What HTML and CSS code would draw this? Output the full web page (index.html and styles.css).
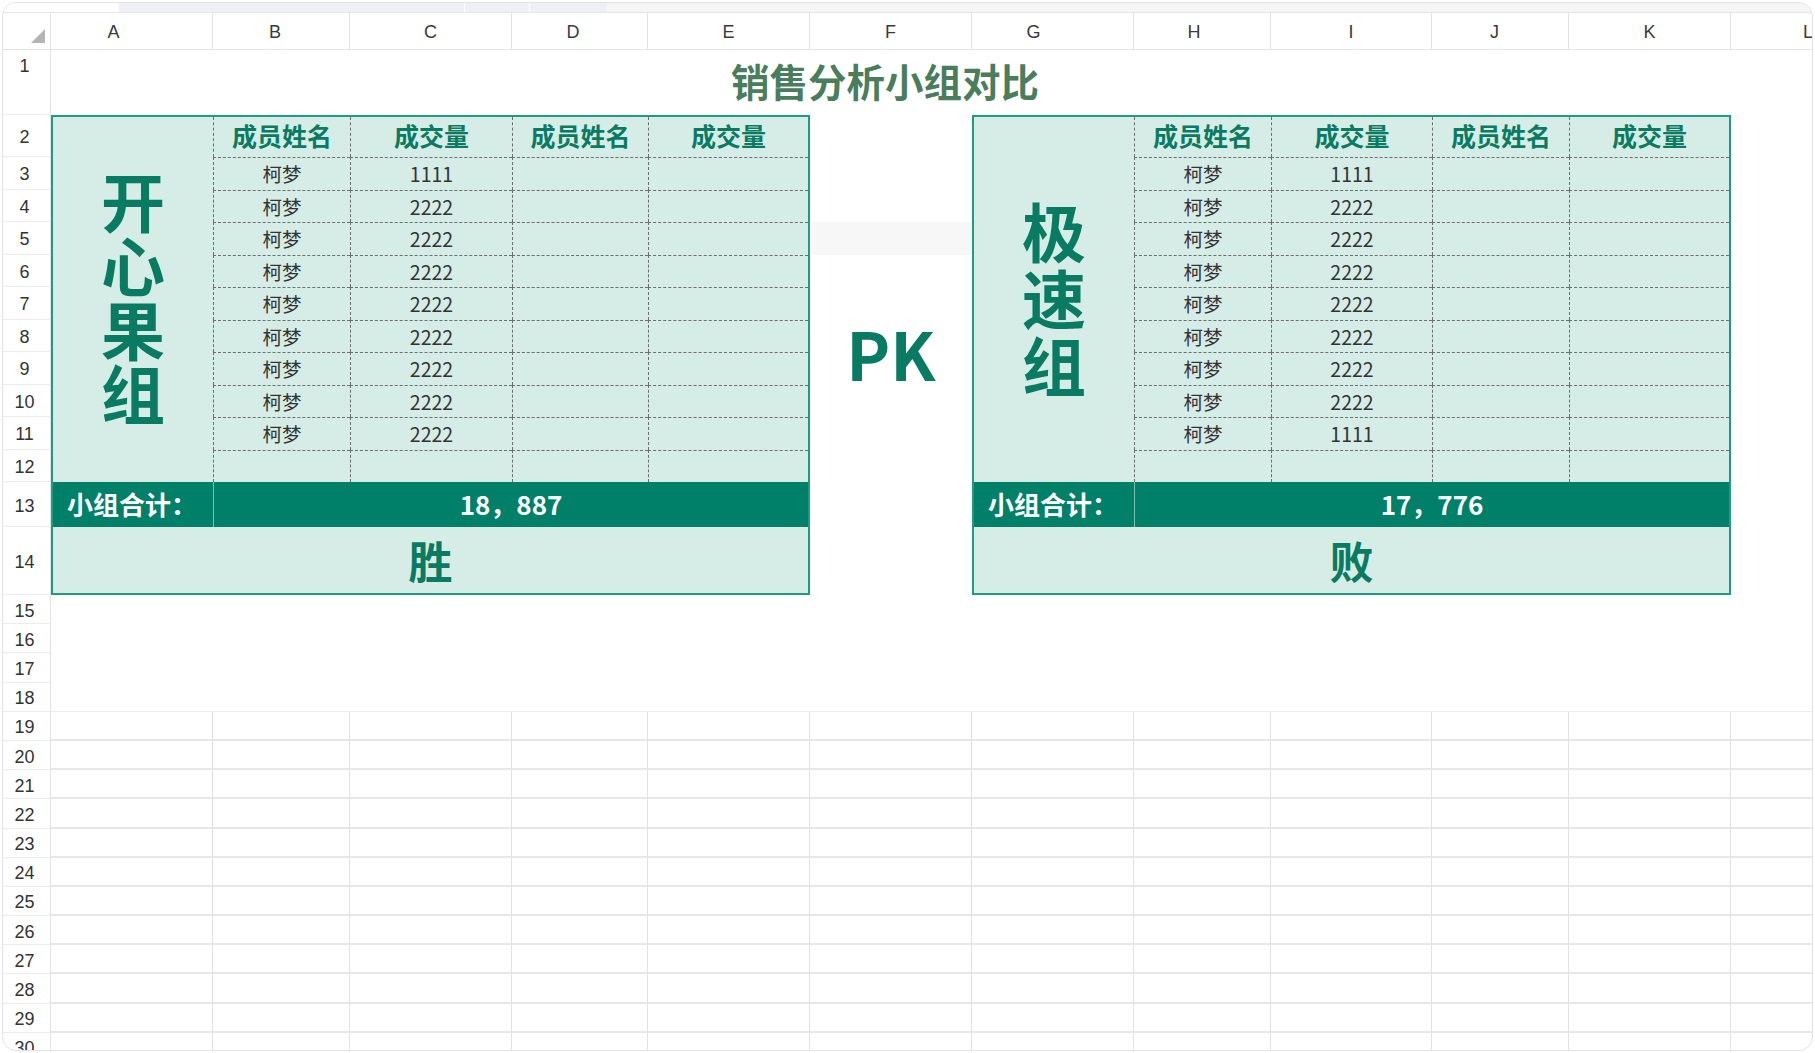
FILE: index.html
```html
<!DOCTYPE html>
<html lang="zh-CN">
<head>
<meta charset="utf-8">
<title>销售分析小组对比</title>
<link rel="stylesheet" href="styles.css">
</head>
<body>
<div class="frame">
  <div class="tabs">
    <div class="tab tab-on"></div>
    <div class="tab tab-a"></div>
    <div class="tab tab-b"></div>
    <div class="tab tab-c"></div>
    <div class="tab tab-rest"></div>
  </div>

  <div class="sheet">
    <div class="corner"><span class="tri"></span></div>
    <div class="ch ch-a">A</div>
    <div class="ch ch-b">B</div>
    <div class="ch">C</div>
    <div class="ch ch-d">D</div>
    <div class="ch">E</div>
    <div class="ch">F</div>
    <div class="ch ch-g">G</div>
    <div class="ch ch-h">H</div>
    <div class="ch">I</div>
    <div class="ch ch-j">J</div>
    <div class="ch">K</div>
    <div class="ch ch-l">L</div>

    <div class="rh rh-top">1</div>
    <div class="rh">2</div>
    <div class="rh">3</div>
    <div class="rh">4</div>
    <div class="rh">5</div>
    <div class="rh">6</div>
    <div class="rh">7</div>
    <div class="rh">8</div>
    <div class="rh">9</div>
    <div class="rh">10</div>
    <div class="rh">11</div>
    <div class="rh">12</div>
    <div class="rh">13</div>
    <div class="rh">14</div>

    <div class="title">销售分析小组对比</div>

    <div class="team team-left">
      <div class="tname"><span>开心果组</span></div>
      <div class="th">成员姓名</div><div class="th">成交量</div><div class="th">成员姓名</div><div class="th">成交量</div>
      <div class="td">柯梦</div><div class="td">1111</div><div class="td"></div><div class="td"></div>
      <div class="td">柯梦</div><div class="td">2222</div><div class="td"></div><div class="td"></div>
      <div class="td">柯梦</div><div class="td">2222</div><div class="td"></div><div class="td"></div>
      <div class="td">柯梦</div><div class="td">2222</div><div class="td"></div><div class="td"></div>
      <div class="td">柯梦</div><div class="td">2222</div><div class="td"></div><div class="td"></div>
      <div class="td">柯梦</div><div class="td">2222</div><div class="td"></div><div class="td"></div>
      <div class="td">柯梦</div><div class="td">2222</div><div class="td"></div><div class="td"></div>
      <div class="td">柯梦</div><div class="td">2222</div><div class="td"></div><div class="td"></div>
      <div class="td">柯梦</div><div class="td">2222</div><div class="td"></div><div class="td"></div>
      <div class="td"></div><div class="td"></div><div class="td"></div><div class="td"></div>
      <div class="sum-label">小组合计：</div>
      <div class="sum-val">18，887</div>
      <div class="result">胜</div>
    </div>

    <div class="shade"></div>
    <div class="pk">PK</div>

    <div class="team team-right">
      <div class="tname tname-r"><span>极速组</span></div>
      <div class="th">成员姓名</div><div class="th">成交量</div><div class="th">成员姓名</div><div class="th">成交量</div>
      <div class="td">柯梦</div><div class="td">1111</div><div class="td"></div><div class="td"></div>
      <div class="td">柯梦</div><div class="td">2222</div><div class="td"></div><div class="td"></div>
      <div class="td">柯梦</div><div class="td">2222</div><div class="td"></div><div class="td"></div>
      <div class="td">柯梦</div><div class="td">2222</div><div class="td"></div><div class="td"></div>
      <div class="td">柯梦</div><div class="td">2222</div><div class="td"></div><div class="td"></div>
      <div class="td">柯梦</div><div class="td">2222</div><div class="td"></div><div class="td"></div>
      <div class="td">柯梦</div><div class="td">2222</div><div class="td"></div><div class="td"></div>
      <div class="td">柯梦</div><div class="td">2222</div><div class="td"></div><div class="td"></div>
      <div class="td">柯梦</div><div class="td">1111</div><div class="td"></div><div class="td"></div>
      <div class="td"></div><div class="td"></div><div class="td"></div><div class="td"></div>
      <div class="sum-label">小组合计：</div>
      <div class="sum-val">17，776</div>
      <div class="result">败</div>
    </div>
  </div>

  <div class="lower">
    <div class="rh">15</div><div class="blank"></div>
    <div class="rh">16</div><div class="blank"></div>
    <div class="rh">17</div><div class="blank"></div>
    <div class="rh">18</div><div class="blank blank-last"></div>

    <div class="rh">19</div><div class="gc"></div><div class="gc"></div><div class="gc"></div><div class="gc"></div><div class="gc"></div><div class="gc"></div><div class="gc"></div><div class="gc"></div><div class="gc"></div><div class="gc"></div><div class="gc"></div><div class="gc gc-end"></div>
    <div class="rh">20</div><div class="gc"></div><div class="gc"></div><div class="gc"></div><div class="gc"></div><div class="gc"></div><div class="gc"></div><div class="gc"></div><div class="gc"></div><div class="gc"></div><div class="gc"></div><div class="gc"></div><div class="gc gc-end"></div>
    <div class="rh">21</div><div class="gc"></div><div class="gc"></div><div class="gc"></div><div class="gc"></div><div class="gc"></div><div class="gc"></div><div class="gc"></div><div class="gc"></div><div class="gc"></div><div class="gc"></div><div class="gc"></div><div class="gc gc-end"></div>
    <div class="rh">22</div><div class="gc"></div><div class="gc"></div><div class="gc"></div><div class="gc"></div><div class="gc"></div><div class="gc"></div><div class="gc"></div><div class="gc"></div><div class="gc"></div><div class="gc"></div><div class="gc"></div><div class="gc gc-end"></div>
    <div class="rh">23</div><div class="gc"></div><div class="gc"></div><div class="gc"></div><div class="gc"></div><div class="gc"></div><div class="gc"></div><div class="gc"></div><div class="gc"></div><div class="gc"></div><div class="gc"></div><div class="gc"></div><div class="gc gc-end"></div>
    <div class="rh">24</div><div class="gc"></div><div class="gc"></div><div class="gc"></div><div class="gc"></div><div class="gc"></div><div class="gc"></div><div class="gc"></div><div class="gc"></div><div class="gc"></div><div class="gc"></div><div class="gc"></div><div class="gc gc-end"></div>
    <div class="rh">25</div><div class="gc"></div><div class="gc"></div><div class="gc"></div><div class="gc"></div><div class="gc"></div><div class="gc"></div><div class="gc"></div><div class="gc"></div><div class="gc"></div><div class="gc"></div><div class="gc"></div><div class="gc gc-end"></div>
    <div class="rh">26</div><div class="gc"></div><div class="gc"></div><div class="gc"></div><div class="gc"></div><div class="gc"></div><div class="gc"></div><div class="gc"></div><div class="gc"></div><div class="gc"></div><div class="gc"></div><div class="gc"></div><div class="gc gc-end"></div>
    <div class="rh">27</div><div class="gc"></div><div class="gc"></div><div class="gc"></div><div class="gc"></div><div class="gc"></div><div class="gc"></div><div class="gc"></div><div class="gc"></div><div class="gc"></div><div class="gc"></div><div class="gc"></div><div class="gc gc-end"></div>
    <div class="rh">28</div><div class="gc"></div><div class="gc"></div><div class="gc"></div><div class="gc"></div><div class="gc"></div><div class="gc"></div><div class="gc"></div><div class="gc"></div><div class="gc"></div><div class="gc"></div><div class="gc"></div><div class="gc gc-end"></div>
    <div class="rh">29</div><div class="gc"></div><div class="gc"></div><div class="gc"></div><div class="gc"></div><div class="gc"></div><div class="gc"></div><div class="gc"></div><div class="gc"></div><div class="gc"></div><div class="gc"></div><div class="gc"></div><div class="gc gc-end"></div>
    <div class="rh">30</div><div class="gc"></div><div class="gc"></div><div class="gc"></div><div class="gc"></div><div class="gc"></div><div class="gc"></div><div class="gc"></div><div class="gc"></div><div class="gc"></div><div class="gc"></div><div class="gc"></div><div class="gc gc-end"></div>
  </div>
</div>
</body>
</html>
```

FILE: styles.css
```css
* { box-sizing: border-box; }

html, body {
  margin: 0;
  padding: 0;
  background: #ffffff;
}

body {
  font-family: "Noto Sans CJK SC", "Noto Sans", sans-serif;
  color: #333333;
}

.frame {
  margin: 2px 0 0 2px;
  width: 1811px;
  height: 1049px;
  border: 1px solid #e3e3e7;
  border-radius: 14px;
  overflow: hidden;
  background: #ffffff;
}

/* top strip */
.tabs {
  display: flex;
  height: 9px;
}
.tab-on { width: 116px; background: #ffffff; }
.tab-a { width: 345px; background: #eef0f5; }
.tab-b { width: 64px; margin-left: 1px; background: #eef0f5; }
.tab-c { width: 77px; margin-left: 1px; background: #eef0f5; }
.tab-rest { flex: 1; background: #f5f5f6; }

/* grid template shared */
.sheet,
.lower {
  display: grid;
  grid-template-columns: 48px 162px 137px 162px 136px 162px 162px 162px 137px 161px 137px 162px 1fr;
}

.sheet {
  grid-template-rows: 38px 65px 42px repeat(10, 32.5px) 45px 68px;
}

.lower {
  grid-auto-rows: 29.2px;
}

/* corner & column headers */
.corner {
  display: flex;
  align-items: flex-end;
  justify-content: flex-end;
  padding: 0 5px 6px 0;
  border-top: 1px solid #e6e6e8;
  border-right: 1px solid #e2e2e2;
  border-bottom: 1px solid #e4e4e4;
}
.tri {
  width: 0;
  height: 0;
  border-left: 14px solid transparent;
  border-bottom: 14px solid #b4b4b4;
}

.ch {
  display: flex;
  align-items: center;
  justify-content: center;
  padding-top: 2px;
  border-top: 1px solid #e6e6e8;
  border-right: 1px solid #e2e2e2;
  border-bottom: 1px solid #e4e4e4;
  font-family: "Liberation Sans", Arial, sans-serif;
  font-size: 18px;
  color: #3a3a3a;
}
.ch-a { padding-right: 36px; }
.ch-b { padding-right: 12px; }
.ch-d { padding-right: 13px; }
.ch-g { padding-right: 38px; }
.ch-h { padding-right: 16px; }
.ch-j { padding-right: 11px; }
.ch-l {
  justify-content: flex-start;
  padding-left: 72px;
  border-right: none;
}

/* row headers */
.rh {
  grid-column: 1;
  display: flex;
  align-items: center;
  justify-content: center;
  padding: 4px 4px 0 0;
  border-right: 1px solid #e2e2e2;
  border-bottom: 1px solid #ececec;
  font-family: "Liberation Sans", Arial, sans-serif;
  font-size: 18px;
  color: #333333;
}
.rh-top {
  align-items: flex-start;
  padding-top: 6px;
}

/* title */
.title {
  grid-column: 2 / 13;
  grid-row: 2;
  display: flex;
  align-items: center;
  justify-content: center;
  padding: 0 12px 5px 0;
  font-size: 38.5px;
  font-weight: 700;
  color: #4a7d5b;
}

/* team blocks */
.team {
  display: grid;
  grid-template-rows: 40px repeat(10, 32.5px) 45px 66px;
  border: 2px solid #1f9a83;
  background: #d5ede6;
}
.team-left {
  grid-column: 2 / 7;
  grid-row: 3 / 16;
  grid-template-columns: 160px 137px 162px 136px 160px;
}
.team-right {
  grid-column: 8 / 13;
  grid-row: 3 / 16;
  grid-template-columns: 160px 137px 161px 137px 160px;
}

.tname {
  grid-column: 1;
  grid-row: 1 / 12;
  display: flex;
  align-items: center;
  justify-content: center;
  padding-bottom: 10px;
}
.tname span {
  width: 1em;
  font-size: 64px;
  line-height: 64px;
  font-weight: 700;
  color: #0a7b63;
  text-align: center;
}
.tname-r {
  padding-bottom: 7px;
}
.tname-r span {
  line-height: 67px;
}

.th,
.td {
  display: flex;
  align-items: center;
  justify-content: center;
  border-left: 1px dashed #6e6e6e;
}
.th {
  padding-bottom: 4px;
  font-size: 25px;
  font-weight: 700;
  color: #0a7b63;
}
.td {
  border-top: 1px dashed #6e6e6e;
  font-size: 19.5px;
  color: #333333;
}

.sum-label {
  grid-column: 1;
  grid-row: 12;
  display: flex;
  align-items: center;
  padding: 0 0 2px 14px;
  background: #008069;
  color: #ffffff;
  font-size: 26px;
  font-weight: 700;
}
.sum-val {
  grid-column: 2 / 6;
  grid-row: 12;
  display: flex;
  align-items: center;
  justify-content: center;
  padding-bottom: 2px;
  background: #008069;
  border-left: 1px solid #7cc0b0;
  color: #ffffff;
  font-size: 26px;
  font-weight: 700;
}
.result {
  grid-column: 1 / 6;
  grid-row: 13;
  display: flex;
  align-items: center;
  justify-content: center;
  font-size: 44px;
  font-weight: 700;
  color: #0a7b63;
}

/* F column: faint band and PK */
.shade {
  grid-column: 7;
  grid-row: 6;
  background: #f7f7f7;
}
.pk {
  grid-column: 7;
  grid-row: 3 / 16;
  display: flex;
  align-items: center;
  justify-content: center;
  padding-bottom: 7px;
  font-size: 66px;
  font-weight: 700;
  color: #0a7b63;
}

/* lower empty sheet area */
.blank {
  grid-column: 2 / -1;
}
.blank-last {
  border-bottom: 1px solid #ededed;
}
.gc {
  border-right: 1px solid #e1e1e1;
  border-bottom: 2px solid #e7e7e7;
}
.gc-end {
  border-right: none;
}
```
